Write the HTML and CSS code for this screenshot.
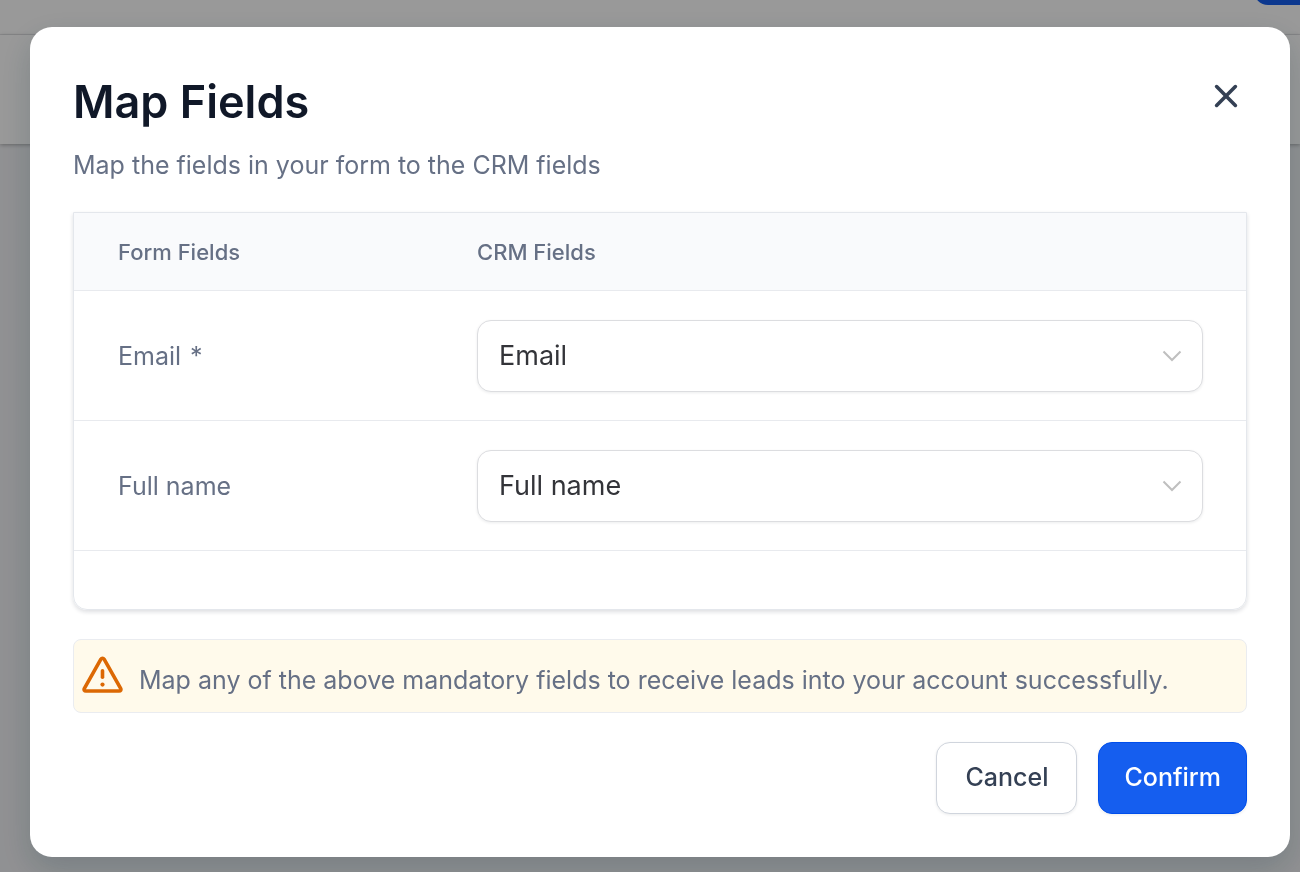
FILE: index.html
```html
<!DOCTYPE html>
<html lang="en">
<head>
    <meta charset="UTF-8">
    <meta name="viewport" content="width=device-width, initial-scale=1.0">
    <title>Map Fields</title>
    <link rel="stylesheet" href="styles.css">
</head>
<body>
    <div class="page">
        <div class="topbar">
            <div class="topbar-action"></div>
        </div>
        <div class="subbar"></div>
    </div>

    <div class="overlay">
        <div class="modal" role="dialog" aria-modal="true" aria-labelledby="modal-title">
            <div class="modal-header">
                <div>
                    <h1 id="modal-title">Map Fields</h1>
                    <p class="description">Map the fields in your form to the CRM fields</p>
                </div>
                <button type="button" class="close" aria-label="Close">
                    <svg width="24" height="24" viewBox="0 0 24 24" fill="none" stroke="currentColor" stroke-width="3.6" stroke-linecap="round">
                        <path d="M2.6 2.6l18.8 18.8M21.4 2.6l-18.8 18.8"/>
                    </svg>
                </button>
            </div>

            <div class="table-card">
                <table>
                    <thead>
                        <tr>
                            <th class="form-col">Form Fields</th>
                            <th>CRM Fields</th>
                        </tr>
                    </thead>
                    <tbody>
                        <tr>
                            <td><label for="map-email">Email <span class="required">*</span></label></td>
                            <td>
                                <div class="select-wrap">
                                    <select id="map-email">
                                        <option selected>Email</option>
                                        <option>Full name</option>
                                    </select>
                                    <svg class="chevron" width="20" height="12" viewBox="0 0 20 12" fill="none" stroke="currentColor" stroke-width="2">
                                        <path d="M1.5 1.5l8.5 8.5 8.5-8.5"/>
                                    </svg>
                                </div>
                            </td>
                        </tr>
                        <tr>
                            <td><label for="map-name">Full name</label></td>
                            <td>
                                <div class="select-wrap">
                                    <select id="map-name">
                                        <option>Email</option>
                                        <option selected>Full name</option>
                                    </select>
                                    <svg class="chevron" width="20" height="12" viewBox="0 0 20 12" fill="none" stroke="currentColor" stroke-width="2">
                                        <path d="M1.5 1.5l8.5 8.5 8.5-8.5"/>
                                    </svg>
                                </div>
                            </td>
                        </tr>
                    </tbody>
                </table>
            </div>

            <div class="notice">
                <svg width="42" height="38" viewBox="0 0 42 38" fill="none" stroke="currentColor" stroke-width="3.6" stroke-linecap="round" stroke-linejoin="round">
                    <path d="M18.9 3.2L2.4 32.3c-.8 1.5 0 2.7 1.5 2.7h33.2c1.5 0 2.3-1.2 1.5-2.7L22.1 3.2c-.8-1.3-2.4-1.3-3.2 0z"/>
                    <path d="M20.5 14.8v6.4"/>
                    <circle cx="20.5" cy="28.6" r="2.1" fill="currentColor" stroke="none"/>
                </svg>
                <p>Map any of the above mandatory fields to receive leads into your account successfully.</p>
            </div>

            <div class="actions">
                <button type="button" class="btn">Cancel</button>
                <button type="button" class="btn btn-primary">Confirm</button>
            </div>
        </div>
    </div>
</body>
</html>
```
FILE: styles.css
```css
* {
    box-sizing: border-box;
}
body {
    margin: 0;
    min-height: 100vh;
    font-family: Inter, "Liberation Sans", sans-serif;
    font-size: 25px;
    line-height: 36px;
    color: #667085;
    background-color: #f1f2f5;
    overflow: hidden;
}
h1, p {
    margin: 0;
}
button, select {
    font-family: inherit;
    cursor: pointer;
}

/* page behind the dialog */
.topbar {
    display: flex;
    justify-content: flex-end;
    height: 35px;
    background-color: #fff;
    border-bottom: 1px solid #e9eaec;
    overflow: hidden;
}
.topbar-action {
    width: 46px;
    height: 40px;
    margin-top: -35px;
    background-color: #155eef;
    border-bottom-left-radius: 14px;
}
.subbar {
    height: 109px;
    background-color: #fff;
    box-shadow: 0 1px 4px rgba(0,0,0,0.3);
}

.overlay {
    position: fixed;
    inset: 0;
    padding: 27px 10px 15px 30px;
    background-color: rgba(0,0,0,0.4);
}
.modal {
    padding: 45px 43px 43px;
    background-color: #fff;
    border-radius: 22px;
    box-shadow: 0 12px 32px rgba(16,50,60,0.2);
}
.modal-header {
    display: flex;
    justify-content: space-between;
    align-items: flex-start;
    margin-bottom: 29px;
}
h1 {
    font-size: 45px;
    line-height: 60px;
    font-weight: 600;
    color: #101828;
}
.description {
    margin-top: 15px;
}
.close {
    display: flex;
    margin: 4px 1px 0 0;
    padding: 8px;
    border: none;
    background: none;
    color: #344054;
}

.table-card {
    padding-bottom: 58px;
    margin-bottom: 29px;
    border: 1px solid #e4e7ec;
    border-radius: 0 0 14px 14px;
    box-shadow: 0 2px 4px rgba(16,24,40,0.14);
}
table {
    width: 100%;
    border-collapse: collapse;
}
th, td {
    padding: 29px 43px 28px 44px;
    border-bottom: 1px solid #e8eaee;
    text-align: left;
}
th {
    padding-top: 21px;
    padding-bottom: 20px;
    font-size: 22px;
    font-weight: 500;
    background-color: #f9fafc;
}
th + th, td + td {
    padding-left: 0;
}
.form-col {
    width: 403px;
}
.required {
    margin-left: 2px;
}
.select-wrap {
    position: relative;
}
select {
    display: block;
    width: 100%;
    height: 72px;
    padding: 0 60px 2px 21px;
    border: 1px solid #dcdde0;
    border-radius: 14px;
    background-color: #fff;
    box-shadow: 0 1px 3px rgba(16,24,40,0.08);
    font-size: 27px;
    color: #333439;
    appearance: none;
}
.chevron {
    position: absolute;
    top: 30px;
    right: 21px;
    color: #bfbfbf;
    pointer-events: none;
}

.notice {
    display: flex;
    align-items: center;
    gap: 15px;
    margin-bottom: 29px;
    padding: 14px 8px;
    border: 1px solid #eaecf0;
    border-radius: 8px;
    background-color: #fffaeb;
}
.notice svg {
    flex: none;
    margin-bottom: 2px;
    color: #dc6803;
}
.notice p {
    padding-top: 8px;
}

.actions {
    display: flex;
    justify-content: flex-end;
    gap: 21px;
}
.btn {
    height: 72px;
    padding: 0 28px 2px;
    border: 1px solid #d0d5dd;
    border-radius: 14px;
    background-color: #fff;
    box-shadow: 0 1px 3px rgba(16,24,40,0.08);
    font-size: 25px;
    font-weight: 500;
    color: #344054;
}
.btn-primary {
    padding: 0 25px 2px;
    border-color: #004eeb;
    background-color: #155eef;
    color: #fff;
}
```
